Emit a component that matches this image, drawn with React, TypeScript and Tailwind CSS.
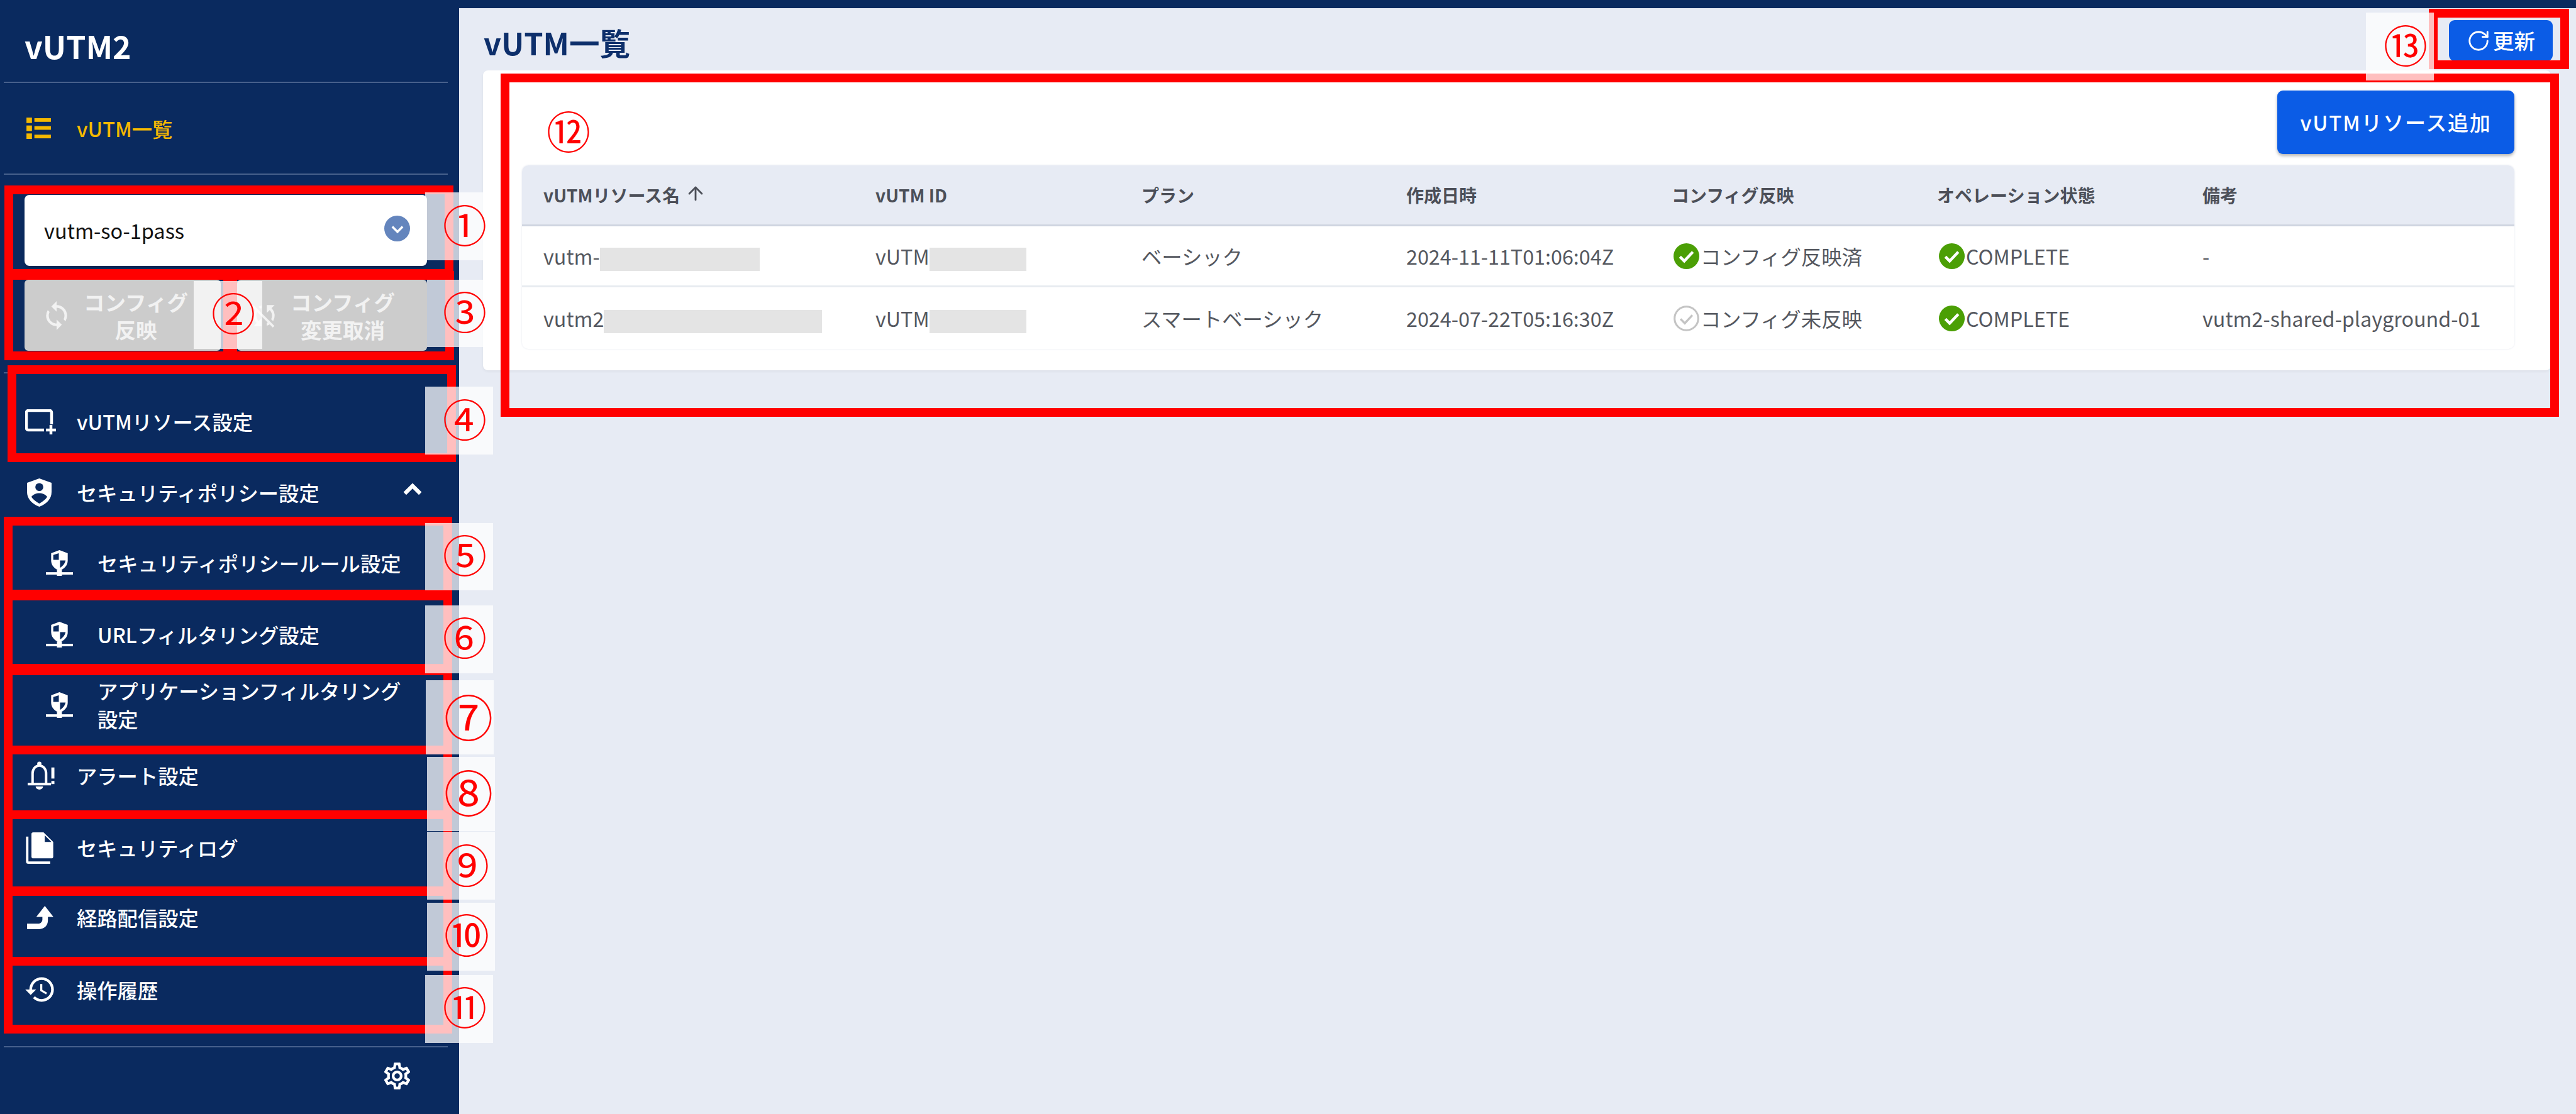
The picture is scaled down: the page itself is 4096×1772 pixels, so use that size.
import type { ReactNode } from "react"
import { ArrowUp, RotateCw } from "lucide-react"
import { MdHistory, MdOutlineSettings, MdSync, MdSyncDisabled } from "react-icons/md"

function ListIcon() {
  return (
    <svg viewBox="0 0 40 35" className="w-[39px] h-[34px]" fill="#f5b800">
      <rect x="0" y="0" width="9" height="9" />
      <rect x="13" y="1" width="27" height="6" />
      <rect x="0" y="13" width="9" height="9" />
      <rect x="13" y="14" width="27" height="6" />
      <rect x="0" y="26" width="9" height="9" />
      <rect x="13" y="28" width="27" height="6" />
    </svg>
  )
}

function ResourceIcon() {
  return (
    <svg viewBox="0 0 50 40" className="w-[50px] h-[40px] shrink-0" fill="none" stroke="white" strokeWidth="4.5">
      <path d="M30 33H5a3 3 0 0 1-3-3V5a3 3 0 0 1 3-3h34a3 3 0 0 1 3 3v19" />
      <path d="M41 25v15M33 33h16" />
    </svg>
  )
}

function ShieldPersonIcon() {
  return (
    <svg viewBox="0 0 40 46" className="w-[39px] h-[45px] ml-[3px] shrink-0">
      <path d="M20 0 40 7v15c0 11-8 20-20 24C8 42 0 33 0 22V7Z" fill="white" />
      <circle cx="20" cy="14" r="6.5" fill="#0a2a5f" />
      <path d="M7 30c3-4 8-6 13-6s10 2 13 6c-3 5-8 8-13 11-5-3-10-6-13-11Z" fill="#0a2a5f" />
    </svg>
  )
}

function ShieldNetworkIcon() {
  return (
    <svg viewBox="0 0 44 42" className="w-[43px] h-[41px] shrink-0">
      <path d="M22 0 35.5 5v12c0 8-5 13-13.5 17C13.500 30 8.500 25 8.500 17V5Z" fill="white" />
      <path d="M21 5v11h-9V8ZM23 17h9c-1 5-4 9-9 12Z" fill="#0a2a5f" />
      <rect x="0" y="36" width="44" height="4" fill="white" />
      <rect x="18" y="32" width="8" height="10" fill="white" />
    </svg>
  )
}

function BellIcon() {
  return (
    <svg viewBox="0 0 45 46" className="w-[44px] h-[45px] ml-[3px] shrink-0" fill="none" stroke="white" strokeWidth="4">
      <path d="M9 36V20c0-8 5-13 11-13s11 5 11 13v16" />
      <path d="M1 37h38" />
      <circle cx="20" cy="4" r="3.5" fill="white" stroke="none" />
      <path d="M14 41h12a6 5 0 0 1-12 0Z" fill="white" stroke="none" />
      <path d="M42 10v18" strokeWidth="5" />
      <rect x="39.500" y="32" width="5" height="5" fill="white" stroke="none" />
    </svg>
  )
}

function DocIcon() {
  return (
    <svg viewBox="0 0 45 53" className="w-[44px] h-[51px] ml-[1px] shrink-0">
      <path d="M12 1h17l16 16v24a3 3 0 0 1-3 3H12a3 3 0 0 1-3-3V4a3 3 0 0 1 3-3Z" fill="white" />
      <path d="M31 6v11h11Z" fill="#0a2a5f" />
      <path d="M2 8v41a2 2 0 0 0 2 2h36" fill="none" stroke="white" strokeWidth="4" />
    </svg>
  )
}

function RouteIcon() {
  return (
    <svg viewBox="0 0 43 38" className="w-[42px] h-[37px] ml-[3px] shrink-0" fill="white">
      <path d="M0 38V29h18c4 0 7-3 7-7v-4H15L29 0l14 18H34v6c0 8-6 14-14 14Z" />
    </svg>
  )
}

function NavItem({ icon, label, className, sub }: { icon: ReactNode; label: ReactNode; className: string; sub?: boolean }) {
  return (
    <div className={`flex items-center ${sub ? "pl-[73px]" : "pl-[40px]"} ${className}`}>
      <span className="flex justify-start shrink-0 w-[44px] mr-[38px]">{icon}</span>
      <span className="text-[32.3px] leading-[45px] font-medium text-white">{label}</span>
    </div>
  )
}

function Divider() {
  return <div className="ml-[6px] w-[706px] h-[2px] bg-[#47608c]" />
}

function Sidebar() {
  return (
    <aside className="w-[730px] h-full shrink-0 bg-[#0a2a5f] flex flex-col">
      <div className="h-[130px] pt-[14px] pl-[39px] flex items-center text-[50px] font-bold text-white">vUTM2</div>
      <Divider />
      <div className="h-[144px] pl-[42px] flex items-center">
        <span className="mr-[41px]"><ListIcon /></span>
        <span className="text-[32.3px] font-medium text-[#f5b800]">vUTM一覧</span>
      </div>
      <Divider />

      <div className="mt-[32px] ml-[39px] w-[640px] h-[113px] bg-white rounded-[8px] shadow-md flex items-center justify-between pl-[31px] pr-[27px]">
        <span className="text-[32.5px] text-[#111111]">vutm-so-1pass</span>
        <span className="w-[41px] h-[41px] -mt-[6px] rounded-full bg-[#6485bd] flex items-center justify-center">
          <svg viewBox="0 0 24 24" className="w-[28px] h-[28px]" fill="none" stroke="white" strokeWidth="3">
            <path d="m5 9 7 7 7-7" />
          </svg>
        </span>
      </div>

      <div className="mt-[22px] ml-[39px] flex gap-[26px]">
        <button className="w-[312px] h-[113px] rounded-[6px] bg-[#cccccc] text-[#f2f2f2] flex items-center pl-[26px] gap-[17px]">
          <MdSync className="w-[50px] h-[50px]" />
          <span className="w-[168px] text-[33.5px] leading-[44px] font-bold text-center">コンフィグ<br />反映</span>
        </button>
        <button className="w-[302px] h-[113px] rounded-[6px] bg-[#cccccc] text-[#f2f2f2] flex items-center pl-[18px] gap-[16px]">
          <MdSyncDisabled className="w-[50px] h-[50px]" />
          <span className="w-[168px] text-[33.5px] leading-[44px] font-bold text-center">コンフィグ<br />変更取消</span>
        </button>
      </div>

      <div className="mt-[34px]"><Divider /></div>

      <NavItem className="h-[153px]" icon={<ResourceIcon />} label="vUTMリソース設定" />
      <div className="h-[72px] flex items-center pr-[53px]">
        <div className="flex-1"><NavItem className="h-[72px]" icon={<ShieldPersonIcon />} label="セキュリティポリシー設定" /></div>
        <svg viewBox="0 0 24 24" className="w-[42px] h-[42px] -mt-[10px]" fill="none" stroke="white" strokeWidth="3.5">
          <path d="m5 16 7-7 7 7" />
        </svg>
      </div>
      <NavItem sub className="h-[152px]" icon={<ShieldNetworkIcon />} label="セキュリティポリシールール設定" />
      <NavItem sub className="h-[76px]" icon={<ShieldNetworkIcon />} label="URLフィルタリング設定" />
      <NavItem sub className="h-[148px]" icon={<ShieldNetworkIcon />} label={<>アプリケーションフィルタリング<br />設定</>} />
      <NavItem className="h-[77px]" icon={<BellIcon />} label="アラート設定" />
      <NavItem className="h-[152px]" icon={<DocIcon />} label="セキュリティログ" />
      <NavItem className="h-[70px]" icon={<RouteIcon />} label="経路配信設定" />
      <NavItem className="h-[160px]" icon={<MdHistory className="w-[52px] h-[52px] -ml-[2px] shrink-0 text-white" />} label="操作履歴" />

      <div className="mt-[10px]"><Divider /></div>
      <div className="h-[90px] pr-[73px] flex items-center justify-end">
        <MdOutlineSettings className="w-[51px] h-[51px] text-white" />
      </div>
    </aside>
  )
}

function Check({ on }: { on: boolean }) {
  return on ? (
    <svg viewBox="0 0 24 24" className="w-[41px] h-[41px] shrink-0 ml-[3px] mr-[2px]">
      <circle cx="12" cy="12" r="12" fill="#4b9f05" />
      <path d="m6 12.5 4 4 8-8.5" fill="none" stroke="white" strokeWidth="2.6" />
    </svg>
  ) : (
    <svg viewBox="0 0 24 24" className="w-[41px] h-[41px] shrink-0 ml-[3px] mr-[2px]">
      <circle cx="12" cy="12" r="11" fill="none" stroke="#c4c4c4" strokeWidth="1.8" />
      <path d="m6.5 12.5 4 4 7-7.5" fill="none" stroke="#c4c4c4" strokeWidth="2" />
    </svg>
  )
}

function Redacted({ className }: { className: string }) {
  return <span className={`inline-block h-[37px] bg-[#e4e4e4] align-middle ${className}`} />
}

const headers = ["プラン", "作成日時", "コンフィグ反映", "オペレーション状態", "備考"]

function ResourceTable() {
  const th = "pl-[34px] text-left text-[28px] font-bold text-[#4c4f58]"
  const td = "pl-[34px] text-[32.3px] text-[#55585f]"
  return (
    <table className="w-[3168px] table-fixed rounded-[10px] shadow-[0_0_3px_#e3e6ee] border-separate border-spacing-0">
      <colgroup>
        <col className="w-[528px]" />
        <col className="w-[423px]" />
        <col className="w-[421px]" />
        <col className="w-[422px]" />
        <col className="w-[422px]" />
        <col className="w-[422px]" />
        <col />
      </colgroup>
      <thead>
        <tr className="h-[97px] bg-[#e7ebf4]">
          <th className={`${th} rounded-tl-[10px] border-b-[3px] border-[#cfd5e0]`}>
            <span className="inline-flex items-center gap-[8px]">vUTMリソース名<ArrowUp className="w-[34px] h-[34px] -mt-[4px]" strokeWidth={2} /></span>
          </th>
          <th className={`${th} border-b-[3px] border-[#cfd5e0]`}>vUTM ID</th>
          {headers.map((h) => (
            <th key={h} className={`${th} border-b-[3px] border-[#cfd5e0] last:rounded-tr-[10px]`}>{h}</th>
          ))}
        </tr>
      </thead>
      <tbody>
        <tr className="h-[97px]">
          <td className={`${td} border-b-[3px] border-[#e7ebf0]`}>vutm-<Redacted className="w-[254px]" /></td>
          <td className={`${td} border-b-[3px] border-[#e7ebf0]`}>vUTM<Redacted className="w-[154px]" /></td>
          <td className={`${td} border-b-[3px] border-[#e7ebf0]`}>ベーシック</td>
          <td className={`${td} border-b-[3px] border-[#e7ebf0]`}>2024-11-11T01:06:04Z</td>
          <td className={`${td} border-b-[3px] border-[#e7ebf0]`}><span className="flex items-center"><Check on />コンフィグ反映済</span></td>
          <td className={`${td} border-b-[3px] border-[#e7ebf0]`}><span className="flex items-center"><Check on />COMPLETE</span></td>
          <td className={`${td} border-b-[3px] border-[#e7ebf0]`}>-</td>
        </tr>
        <tr className="h-[98px]">
          <td className={td}>vutm2<Redacted className="w-[347px]" /></td>
          <td className={td}>vUTM<Redacted className="w-[154px]" /></td>
          <td className={td}>スマートベーシック</td>
          <td className={td}>2024-07-22T05:16:30Z</td>
          <td className={td}><span className="flex items-center"><Check on={false} />コンフィグ未反映</span></td>
          <td className={td}><span className="flex items-center"><Check on />COMPLETE</span></td>
          <td className={td}>vutm2-shared-playground-01</td>
        </tr>
      </tbody>
    </table>
  )
}

function Main() {
  return (
    <main className="flex-1 min-w-0 h-full bg-[#e7ebf4] flex flex-col">
      <div className="h-[13px] shrink-0 bg-[#0a2a5f]" />
      <div className="h-[99px] shrink-0 pt-[19px] pl-[39px] pr-[37px] flex items-start justify-between">
        <h1 className="h-[65px] mt-[3px] flex items-center text-[48.5px] font-bold text-[#0d2f6b]">vUTM一覧</h1>
        <button className="w-[165px] h-[65px] rounded-[9px] bg-[#0b5ce6] text-white flex items-center justify-center gap-[4px] text-[33.5px] font-medium">
          <RotateCw className="w-[38px] h-[38px]" strokeWidth={1.8} />更新
        </button>
      </div>
      <section className="ml-[38px] mr-[40px] h-[477px] bg-white rounded-[8px] shadow-[0_2px_4px_rgba(0,0,0,0.05)] pt-[32px] pl-[62px] pr-[58px]">
        <div className="flex justify-end">
          <button className="w-[377px] h-[101px] rounded-[9px] bg-[#0b5ce6] text-white text-[33px] font-medium tracking-[1.8px] shadow-[0_3px_5px_rgba(0,0,0,0.3)]">
            vUTMリソース追加
          </button>
        </div>
        <div className="mt-[18px]"><ResourceTable /></div>
      </section>
    </main>
  )
}

function Annotations() {
  const box = "absolute border-[14px] border-[#ff0000]"
  const patch = "absolute bg-white/75"
  const num = "absolute -translate-x-1/2 -translate-y-1/2 leading-none font-normal text-[#ff0000]"
  return (
    <div className="absolute inset-0 pointer-events-none">
      <div className={`${box} left-[7px] top-[295px] w-[714px] h-[147px]`} />
      <div className={`${box} left-[7px] top-[431px] w-[362px] h-[142px]`} />
      <div className={`${box} left-[363px] top-[431px] w-[359px] h-[142px]`} />
      <div className={`${box} left-[12px] top-[581px] w-[713px] h-[154px]`} />
      <div className={`${box} left-[6px] top-[822px] w-[713px] h-[130px]`} />
      <div className={`${box} left-[6px] top-[941px] w-[713px] h-[129px]`} />
      <div className={`${box} left-[6px] top-[1060px] w-[713px] h-[140px]`} />
      <div className={`${box} left-[6px] top-[1186px] w-[713px] h-[117px]`} />
      <div className={`${box} left-[6px] top-[1289px] w-[713px] h-[136px]`} />
      <div className={`${box} left-[6px] top-[1410px] w-[713px] h-[126px]`} />
      <div className={`${box} left-[6px] top-[1522px] w-[713px] h-[122px]`} />
      <div className={`${box} left-[796px] top-[117px] w-[3273px] h-[546px]`} />
      <div className={`${box} left-[3862px] top-[14px] w-[223px] h-[96px]`} />

      <div className={`${patch} left-[676px] top-[306px] w-[108px] h-[108px]`} />
      <div className={`${patch} left-[308px] top-[447px] w-[109px] h-[108px]`} />
      <div className={`${patch} left-[679px] top-[445px] w-[108px] h-[107px]`} />
      <div className={`${patch} left-[676px] top-[615px] w-[108px] h-[108px]`} />
      <div className={`${patch} left-[676px] top-[832px] w-[108px] h-[107px]`} />
      <div className={`${patch} left-[676px] top-[963px] w-[108px] h-[108px]`} />
      <div className={`${patch} left-[677px] top-[1082px] w-[108px] h-[118px]`} />
      <div className={`${patch} left-[679px] top-[1204px] w-[108px] h-[118px]`} />
      <div className={`${patch} left-[679px] top-[1323px] w-[108px] h-[108px]`} />
      <div className={`${patch} left-[679px] top-[1436px] w-[108px] h-[108px]`} />
      <div className={`${patch} left-[676px] top-[1551px] w-[108px] h-[108px]`} />
      <div className={`${patch} left-[3762px] top-[20px] w-[108px] h-[108px]`} />

      <span className={`${num} text-[70px] left-[739px] top-[356px]`}>①</span>
      <span className={`${num} text-[70px] left-[371px] top-[496px]`}>②</span>
      <span className={`${num} text-[70px] left-[739px] top-[494px]`}>③</span>
      <span className={`${num} text-[70px] left-[739px] top-[665px]`}>④</span>
      <span className={`${num} text-[70px] left-[739px] top-[881px]`}>⑤</span>
      <span className={`${num} text-[70px] left-[739px] top-[1012px]`}>⑥</span>
      <span className={`${num} text-[78px] left-[745px] top-[1138px]`}>⑦</span>
      <span className={`${num} text-[78px] left-[745px] top-[1258px]`}>⑧</span>
      <span className={`${num} text-[72px] left-[742px] top-[1373px]`}>⑨</span>
      <span className={`${num} text-[72px] left-[742px] top-[1484px]`}>⑩</span>
      <span className={`${num} text-[70px] left-[739px] top-[1600px]`}>⑪</span>
      <span className={`${num} text-[70px] left-[904px] top-[207px]`}>⑫</span>
      <span className={`${num} text-[70px] left-[3825px] top-[70px]`}>⑬</span>
    </div>
  )
}

export default function App() {
  return (
    <div className="relative w-[4096px] h-[1772px] overflow-hidden flex [font-family:'Noto_Sans_CJK_JP',sans-serif]">
      <Sidebar />
      <Main />
      <Annotations />
    </div>
  )
}
